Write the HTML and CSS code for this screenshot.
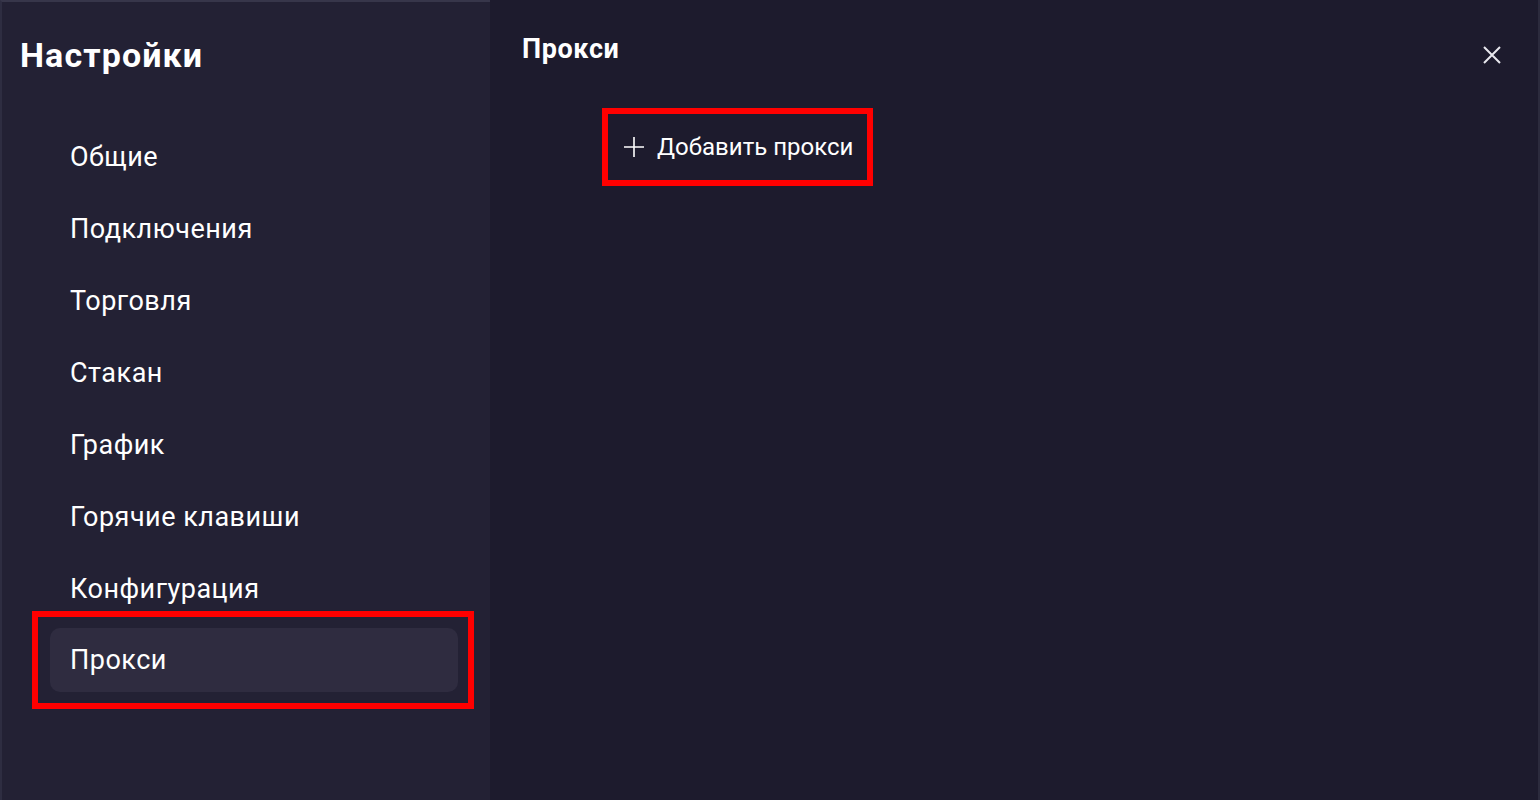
FILE: index.html
```html
<!DOCTYPE html>
<html>
<head>
<title>Настройки</title>
<link rel="stylesheet" href="styles.css">
</head>
<body>
<div class="settings">
  <div class="sidebar">
    <h1>Настройки</h1>
    <div class="menu">
      <div class="menu-item">Общие</div>
      <div class="menu-item">Подключения</div>
      <div class="menu-item">Торговля</div>
      <div class="menu-item">Стакан</div>
      <div class="menu-item">График</div>
      <div class="menu-item">Горячие клавиши</div>
      <div class="menu-item">Конфигурация</div>
      <div class="highlight">
        <div class="menu-item active">Прокси</div>
      </div>
    </div>
  </div>
  <div class="content">
    <div class="content-header">
      <h2>Прокси</h2>
      <button class="close-btn">
        <svg width="18" height="18" viewBox="0 0 18 18"><path d="M1 1L17 17M17 1L1 17" stroke="#e8e8ee" stroke-width="2"/></svg>
      </button>
    </div>
    <div class="add-wrap">
      <button class="add-btn">
        <svg width="20" height="20" viewBox="0 0 20 20"><path d="M10 0V20M0 10H20" stroke="#ffffff" stroke-width="1.6"/></svg>
        <span>Добавить прокси</span>
      </button>
    </div>
  </div>
</div>
</body>
</html>
```

FILE: styles.css
```css
body {
  margin: 0;
  font-family: Roboto, "Noto Sans", sans-serif;
  background-color: #1d1b2d;
  color: #ffffff;
}
.settings {
  display: flex;
  height: 800px;
  border-right: 2px solid #2c2b3d;
}
.sidebar {
  background-color: #232134;
  border-top: 2px solid #37364a;
  border-left: 2px solid #2e2d41;
  box-sizing: border-box;
  width: 490px;
  padding: 0 0 0 18px;
}
.sidebar h1 {
  margin: 0;
  padding-top: 33px;
  font-size: 34px;
  font-weight: 700;
  letter-spacing: 1.1px;
  line-height: 40px;
}
.menu {
  margin-top: 46px;
  padding-left: 30px;
}
.menu-item {
  font-size: 27px;
  letter-spacing: 0.5px;
  line-height: 72px;
  height: 72px;
  padding-left: 20px;
}
.highlight {
  margin-left: -18px;
  width: 408px;
  border: 6px solid #ff0000;
  padding: 11px 10px 11px 12px;
  margin-top: -14px;
}
.menu-item.active {
  background-color: #2f2c40;
  border-radius: 10px;
  height: 64px;
  line-height: 64px;
}
.content {
  flex: 1;
  padding: 32px 0 0 32px;
}
.content-header {
  display: flex;
  justify-content: space-between;
  align-items: flex-start;
}
.content-header h2 {
  margin: 0;
  font-size: 27px;
  font-weight: 700;
  letter-spacing: 0.6px;
  line-height: 34px;
}
.close-btn {
  background: none;
  border: none;
  padding: 0;
  margin: 14px 37px 0 0;
  cursor: pointer;
}
.add-wrap {
  margin-top: 41px;
  margin-left: 80px;
}
.add-btn {
  display: flex;
  align-items: center;
  gap: 13px;
  background: none;
  color: #ffffff;
  font-family: Roboto, "Noto Sans", sans-serif;
  font-size: 24px;
  border: 6px solid #ff0000;
  padding: 0 14px 0 16px;
  height: 78px;
  cursor: pointer;
}
```
